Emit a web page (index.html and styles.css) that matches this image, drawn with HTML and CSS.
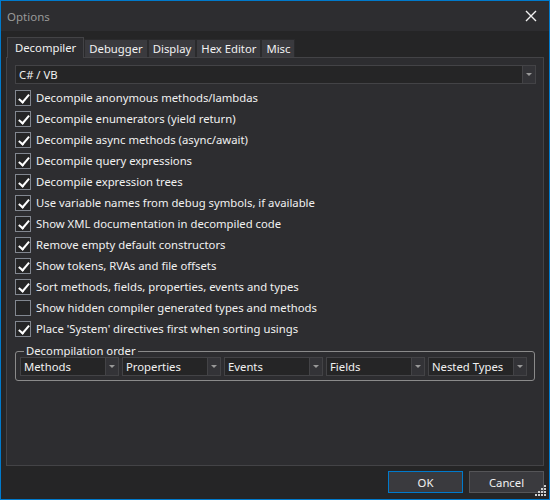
FILE: index.html
```html
<!DOCTYPE html>
<html>
<head>
<meta charset="utf-8">
<link rel="stylesheet" href="styles.css">
</head>
<body>
<div class="window">
  <div class="titlebar">
    <span class="title">Options</span>
    <svg class="close" width="12" height="12" viewBox="0 0 12 12"><path d="M1 1L11 11M11 1L1 11" stroke="#f1f1f1" stroke-width="1.4"/></svg>
  </div>
  <div class="content">
    <div class="tabs">
      <div class="tab active">Decompiler</div>
      <div class="tab">Debugger</div>
      <div class="tab">Display</div>
      <div class="tab">Hex Editor</div>
      <div class="tab">Misc</div>
    </div>
    <div class="panel">
      <div class="combo wide"><span class="ctext">C# / VB</span><span class="drop"><i class="arrow"></i></span></div>
      <div class="checks">
        <label class="row"><span class="box on"></span>Decompile anonymous methods/lambdas</label>
        <label class="row"><span class="box on"></span>Decompile enumerators (yield return)</label>
        <label class="row"><span class="box on"></span>Decompile async methods (async/await)</label>
        <label class="row"><span class="box on"></span>Decompile query expressions</label>
        <label class="row"><span class="box on"></span>Decompile expression trees</label>
        <label class="row"><span class="box on"></span>Use variable names from debug symbols, if available</label>
        <label class="row"><span class="box on"></span>Show XML documentation in decompiled code</label>
        <label class="row"><span class="box on"></span>Remove empty default constructors</label>
        <label class="row"><span class="box on"></span>Show tokens, RVAs and file offsets</label>
        <label class="row"><span class="box on"></span>Sort methods, fields, properties, events and types</label>
        <label class="row"><span class="box"></span>Show hidden compiler generated types and methods</label>
        <label class="row"><span class="box on"></span>Place 'System' directives first when sorting usings</label>
      </div>
      <fieldset class="group">
        <legend>Decompilation order</legend>
        <div class="order">
          <div class="combo"><span class="ctext">Methods</span><span class="drop"><i class="arrow"></i></span></div>
          <div class="combo"><span class="ctext">Properties</span><span class="drop"><i class="arrow"></i></span></div>
          <div class="combo"><span class="ctext">Events</span><span class="drop"><i class="arrow"></i></span></div>
          <div class="combo"><span class="ctext">Fields</span><span class="drop"><i class="arrow"></i></span></div>
          <div class="combo"><span class="ctext">Nested Types</span><span class="drop"><i class="arrow"></i></span></div>
        </div>
      </fieldset>
    </div>
    <div class="buttons">
      <div class="btn ok">OK</div>
      <div class="btn">Cancel</div>
    </div>
  </div>
  <svg class="grip" width="12" height="12" viewBox="0 0 12 12" fill="#cfcfcf">
    <rect x="9" y="0" width="2" height="2"/>
    <rect x="6" y="3" width="2" height="2"/><rect x="9" y="3" width="2" height="2"/>
    <rect x="3" y="6" width="2" height="2"/><rect x="6" y="6" width="2" height="2"/><rect x="9" y="6" width="2" height="2"/>
    <rect x="0" y="9" width="2" height="2"/><rect x="3" y="9" width="2" height="2"/><rect x="6" y="9" width="2" height="2"/><rect x="9" y="9" width="2" height="2"/>
  </svg>
</div>
</body>
</html>
```
FILE: styles.css
```css
html, body {
  margin: 0;
  padding: 0;
  background: #252526;
}
body {
  font-family: "Noto Sans", "Open Sans", sans-serif;
  font-size: 11.3px;
  color: #f1f1f1;
}
.window {
  position: relative;
  width: 550px;
  height: 500px;
  box-sizing: border-box;
  border: 1px solid #007acc;
  background: #252526;
  display: flex;
  flex-direction: column;
}
.titlebar {
  height: 30px;
  background: #2d2d30;
  display: flex;
  align-items: center;
  justify-content: space-between;
  padding: 0 12px 0 6px;
  flex: none;
}
.title {
  color: #999999;
  font-size: 11.5px;
}
.close {
  display: block;
}
.content {
  flex: 1;
  display: flex;
  flex-direction: column;
  padding: 6px 5px 0 5px;
}
.tabs {
  display: flex;
  align-items: flex-end;
  height: 20px;
  padding-left: 1px;
  position: relative;
  z-index: 2;
}
.tab {
  height: 18px;
  line-height: 17px;
  box-sizing: border-box;
  padding: 0 4px;
  background: #3a3a3e;
  border: 1px solid #2a2a2c;
  border-bottom: none;
  color: #f1f1f1;
}
.tab.active {
  height: 21px;
  line-height: 20px;
  background: #2d2d30;
  border: 1px solid #434346;
  border-bottom: none;
  padding: 0 7px;
  margin-bottom: -1px;
}
.panel {
  height: 409px;
  box-sizing: border-box;
  background: #2d2d30;
  border: 1px solid #434346;
  padding: 7px 7px 0 8px;
}
.combo {
  height: 19px;
  box-sizing: border-box;
  border: 1px solid #434346;
  background: #252526;
  display: flex;
  align-items: center;
}
.combo.wide {
  width: 521px;
}
.ctext {
  flex: 1;
  padding-left: 3px;
  line-height: 17px;
  white-space: nowrap;
}
.drop {
  width: 12px;
  height: 17px;
  border-left: 1px solid #434346;
  background: #333337;
  display: flex;
  align-items: center;
  justify-content: center;
  flex: none;
}
.arrow {
  width: 0;
  height: 0;
  border-left: 3px solid transparent;
  border-right: 3px solid transparent;
  border-top: 3px solid #999999;
}
.checks {
  display: flex;
  flex-direction: column;
  margin-top: 3px;
}
.row {
  height: 21px;
  display: flex;
  align-items: center;
  gap: 5px;
}
.box {
  width: 16px;
  height: 16px;
  box-sizing: border-box;
  border: 1px solid #828790;
  background: #252526;
  position: relative;
  flex: none;
}
.box.on::after {
  content: "";
  position: absolute;
  left: 5px;
  top: 1px;
  width: 4px;
  height: 9px;
  border-right: 2px solid #ffffff;
  border-bottom: 2px solid #ffffff;
  transform: rotate(40deg);
}
.group {
  margin: 6px 0 0 0;
  width: 520px;
  min-width: 0;
  box-sizing: border-box;
  border: 1px solid #8a8a8a;
  border-radius: 3px;
  padding: 0 6px 4px 4px;
}
.group legend {
  padding: 0 2px;
  margin-left: 4px;
  line-height: 12px;
}
.order {
  display: flex;
  gap: 3px;
}
.order .combo {
  width: 99px;
  flex: none;
}
.buttons {
  display: flex;
  justify-content: flex-end;
  gap: 6px;
  padding: 5px 0 0 0;
}
.btn {
  width: 75px;
  height: 22px;
  box-sizing: border-box;
  background: #3a3a3e;
  border: 1px solid #555558;
  display: flex;
  align-items: center;
  justify-content: center;
}
.btn.ok {
  border-color: #007acc;
}
.grip {
  position: absolute;
  right: 2px;
  bottom: 2px;
}
```
